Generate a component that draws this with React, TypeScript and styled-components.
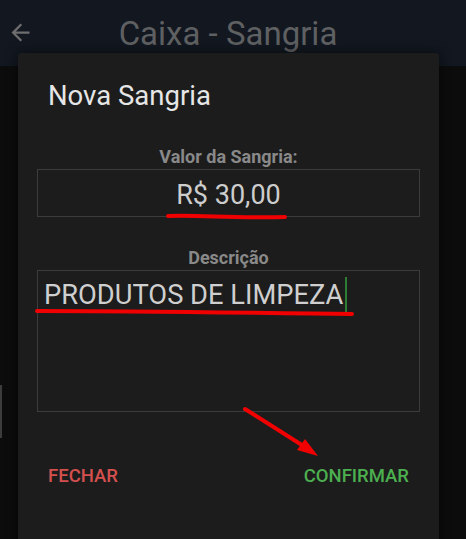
import React from 'react'
import styled, { createGlobalStyle } from 'styled-components'
import { MdArrowBack } from 'react-icons/md'

const GlobalStyle = createGlobalStyle`
  html, body {
    margin: 0;
    padding: 0;
    background: #0c0c0c;
    font-family: Roboto, 'Noto Sans', sans-serif;
  }
`

const App = () => {
  return (
    <Page>
      <GlobalStyle />
      <Header>
        <BackButton>
          <MdArrowBack size={27} />
        </BackButton>
        <HeaderTitle>Caixa - Sangria</HeaderTitle>
      </Header>
      <Body>
        <EdgeLine />
      </Body>

      <Dialog>
        <DialogTitle>Nova Sangria</DialogTitle>

        <FieldLabel>Valor da Sangria:</FieldLabel>
        <ValueBox>R$ 30,00</ValueBox>

        <FieldLabel $top={30}>Descrição</FieldLabel>
        <TextBox>
          PRODUTOS DE LIMPEZA
          <Caret />
        </TextBox>

        <Actions>
          <ActionButton $color="#d4504f">FECHAR</ActionButton>
          <ActionButton $color="#4caf50">CONFIRMAR</ActionButton>
        </Actions>
      </Dialog>

      <Marks width="466" height="539" viewBox="0 0 466 539">
        <path
          d="M168 216 C200 215 230 218 285 217"
          stroke="#f00000"
          strokeWidth="4"
          strokeLinecap="round"
          fill="none"
        />
        <path
          d="M37 311 C150 311 250 313 352 314"
          stroke="#f00000"
          strokeWidth="4"
          strokeLinecap="round"
          fill="none"
        />
        <path
          d="M245 409 L305 447"
          stroke="#f00000"
          strokeWidth="4"
          strokeLinecap="round"
          fill="none"
        />
        <polygon points="318,456 297,450 305,439" fill="#f00000" />
      </Marks>
    </Page>
  )
}

const Page = styled.div`
  position: relative;
  width: 466px;
  height: 539px;
  overflow: hidden;
  display: flex;
  flex-direction: column;
  background: #0c0c0c;
`

const Header = styled.header`
  height: 66px;
  flex-shrink: 0;
  background: #121720;
  display: flex;
  align-items: center;
  position: relative;
`

const BackButton = styled.div`
  display: flex;
  align-items: center;
  margin-left: 7px;
  margin-top: -1px;
  color: #6e6e6e;
`

const HeaderTitle = styled.h1`
  position: absolute;
  left: 0;
  right: 10px;
  top: 14px;
  margin: 0;
  text-align: center;
  font-size: 33px;
  font-weight: 400;
  line-height: 40px;
  color: #5f6062;
`

const Body = styled.div`
  flex: 1;
  position: relative;
`

const EdgeLine = styled.div`
  position: absolute;
  left: 0;
  top: 319px;
  width: 2px;
  height: 53px;
  background: #3c3c3c;
`

const Dialog = styled.div`
  position: absolute;
  top: 53px;
  left: 18px;
  width: 421px;
  bottom: -10px;
  background: #1c1c1c;
  border-radius: 3px;
  box-shadow: 0 0 12px rgba(0, 0, 0, 0.6);
  padding: 27px 19px 0;
  box-sizing: border-box;
  display: flex;
  flex-direction: column;
`

const DialogTitle = styled.h2`
  margin: 0 0 0 11px;
  font-size: 27.5px;
  line-height: 32px;
  font-weight: 400;
  color: #e6e6e6;
`

const FieldLabel = styled.div<{ $top?: number }>`
  margin-top: ${(p) => p.$top ?? 34}px;
  margin-bottom: 2px;
  text-align: center;
  font-size: 18px;
  line-height: 21px;
  font-weight: 700;
  color: #898989;
`

const ValueBox = styled.div`
  height: 48px;
  box-sizing: border-box;
  border: 1px solid #3c3c3c;
  display: flex;
  align-items: center;
  justify-content: center;
  padding-top: 3px;
  font-size: 27px;
  color: #cdcdcd;
`

const TextBox = styled.div`
  height: 142px;
  box-sizing: border-box;
  border: 1px solid #3c3c3c;
  padding: 8px 6px 0;
  font-size: 27.3px;
  line-height: 32px;
  color: #cfcfcf;
  display: flex;
  align-items: flex-start;
`

const Caret = styled.span`
  display: inline-block;
  width: 2px;
  height: 36px;
  margin-top: -2px;
  margin-left: 2px;
  background: #2e7d32;
`

const Actions = styled.div`
  margin-top: 53px;
  padding: 0 11px;
  display: flex;
  justify-content: space-between;
`

const ActionButton = styled.button<{ $color: string }>`
  background: none;
  border: none;
  padding: 0;
  font-family: inherit;
  font-size: 18.5px;
  line-height: 22px;
  font-weight: 500;
  color: ${(p) => p.$color};
  cursor: pointer;
`

const Marks = styled.svg`
  position: absolute;
  left: 0;
  top: 0;
  pointer-events: none;
`

export default App
